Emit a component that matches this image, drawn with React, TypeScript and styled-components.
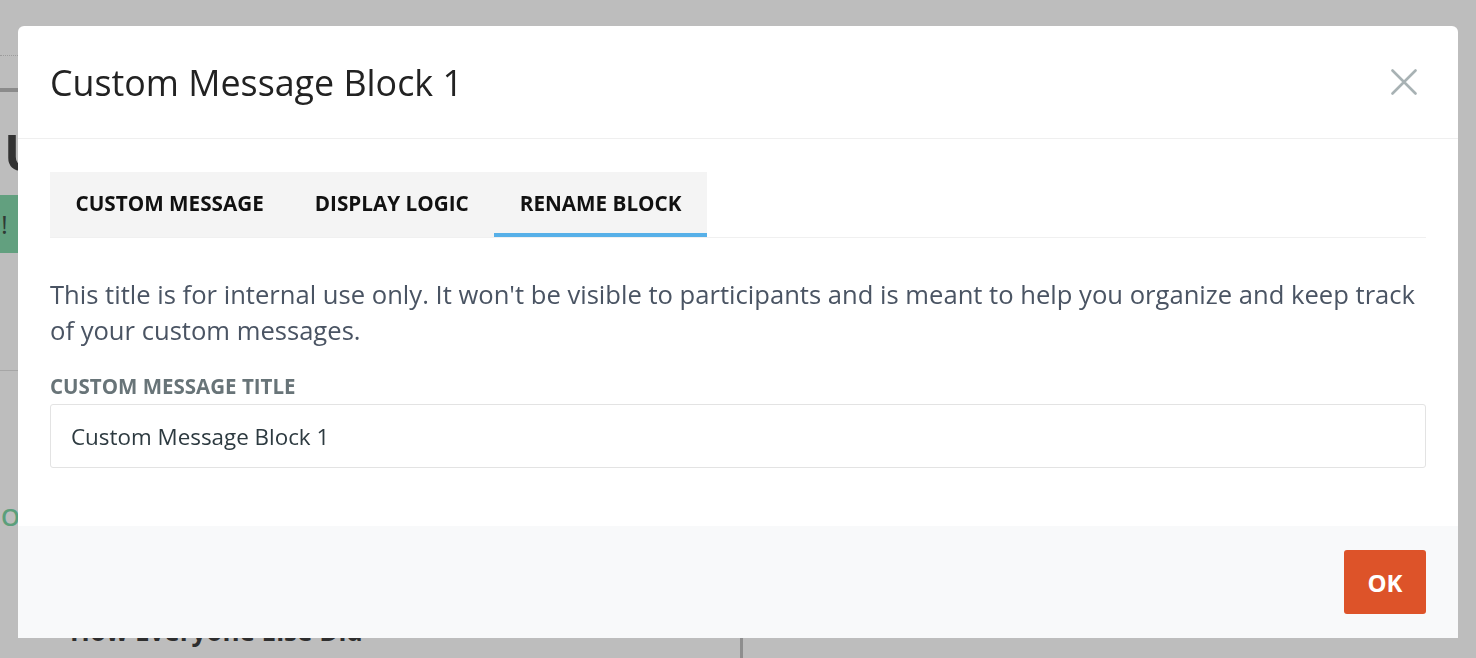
import React from "react";
import styled, { createGlobalStyle } from "styled-components";

const GlobalStyle = createGlobalStyle`
  html, body {
    margin: 0;
    padding: 0;
    background: #bdbdbd;
    overflow: hidden;
  }
  body {
    font-family: "Open Sans", "Liberation Sans", sans-serif;
  }
  * {
    box-sizing: border-box;
  }
`;

/* dimmed page behind the dialog */
const Page = styled.div`
  width: 1476px;
  height: 658px;
  background: #bdbdbd;
  overflow: hidden;
`;

const DottedRule = styled.div`
  margin-top: 55px;
  width: 600px;
  border-top: 1px dotted #9c9c9c;
`;

const NavBar = styled.div`
  margin-top: 32px;
  width: 700px;
  height: 4px;
  background: #8b8b8b;
`;

const PageHeading = styled.h1`
  margin: 30px 0 0 4px;
  font-size: 50px;
  line-height: 60px;
  font-weight: 700;
  color: #333;
`;

const Alert = styled.div`
  margin-top: 13px;
  width: 700px;
  height: 58px;
  padding-left: 1px;
  background: #62a07f;
  color: #2f3a34;
  font-size: 26px;
  line-height: 58px;
`;

const SectionRule = styled.div`
  margin-top: 117px;
  width: 700px;
  height: 1px;
  background: #a6a6a6;
`;

const GreenLink = styled.div`
  margin-top: 131px;
  padding-left: 1px;
  color: #5b9f7b;
  font-size: 24px;
  font-weight: 600;
  line-height: 30px;
`;

const Split = styled.div`
  margin-top: 83px;
  display: grid;
  grid-template-columns: 743px 1fr;
`;

const SplitLeft = styled.div`
  padding-left: 70px;
  height: 80px;
  border-right: 3px solid #8e8e8e;
`;

const SubHeading = styled.h2`
  margin: 0;
  font-size: 26px;
  line-height: 32px;
  font-weight: 700;
  color: #2e2e2e;
`;

/* dialog */
const Overlay = styled.div`
  position: fixed;
  inset: 0;
  padding: 26px 18px 0;
`;

const Dialog = styled.div`
  width: 1440px;
  height: 612px;
  background: #fff;
  border-radius: 6px 6px 0 0;
  display: flex;
  flex-direction: column;
  overflow: hidden;
`;

const Header = styled.div`
  height: 113px;
  padding: 0 32px;
  display: flex;
  align-items: center;
  justify-content: space-between;
  border-bottom: 1px solid #efefef;
`;

const Title = styled.h2`
  margin: 0;
  font-size: 35.8px;
  font-weight: 400;
  color: #222;
`;

const CloseButton = styled.button`
  width: 40px;
  height: 40px;
  margin-right: 2px;
  border: none;
  background: none;
  padding: 0;
  display: flex;
  align-items: center;
  justify-content: center;
  cursor: pointer;
`;

const Body = styled.div`
  flex: 1;
  padding: 33px 32px 0;
`;

const TabRow = styled.div`
  display: flex;
  border-bottom: 1px solid #f0f0f0;
`;

const TabList = styled.div`
  display: flex;
  background: #f4f4f4;
`;

const Tab = styled.div<{ $active?: boolean }>`
  height: 65px;
  padding: 1px 25.5px 0;
  display: flex;
  align-items: center;
  font-size: 20.7px;
  font-weight: 700;
  color: #111;
  border-bottom: 4px solid ${(p) => (p.$active ? "#57b0e8" : "transparent")};
`;

const Intro = styled.p`
  margin: 39px 0 0;
  font-size: 25.6px;
  line-height: 36px;
  color: #4a5463;
`;

const Label = styled.label`
  display: block;
  margin-top: 25px;
  font-size: 20.5px;
  font-weight: 700;
  color: #687478;
  line-height: 24px;
`;

const TextInput = styled.input`
  display: block;
  width: 100%;
  height: 64px;
  margin-top: 6px;
  padding: 0 20px;
  border: 1px solid #e3e3e3;
  border-radius: 3px;
  font-family: "Open Sans", "Liberation Sans", sans-serif;
  font-size: 22.4px;
  color: #2d3a40;
  outline: none;
`;

const Footer = styled.div`
  height: 112px;
  padding: 24px 32px;
  background: #f8f9fa;
  display: flex;
  justify-content: flex-end;
`;

const OkButton = styled.button`
  width: 82px;
  height: 64px;
  border: none;
  border-radius: 3px;
  background: #dd5329;
  color: #fff;
  font-family: "Open Sans", "Liberation Sans", sans-serif;
  font-size: 24px;
  font-weight: 700;
  cursor: pointer;
`;

export default function App() {
  return (
    <>
      <GlobalStyle />
      <Page>
        <DottedRule />
        <NavBar />
        <PageHeading>Ultimate Guide</PageHeading>
        <Alert>!</Alert>
        <SectionRule />
        <GreenLink>O</GreenLink>
        <Split>
          <SplitLeft>
            <SubHeading>How Everyone Else Did</SubHeading>
          </SplitLeft>
          <div />
        </Split>
      </Page>
      <Overlay>
        <Dialog>
          <Header>
            <Title>Custom Message Block 1</Title>
            <CloseButton aria-label="Close">
              <svg width="26" height="26" viewBox="0 0 26 26">
                <path
                  d="M1.5 1.5 L24.5 24.5 M24.5 1.5 L1.5 24.5"
                  stroke="#a8b2b4"
                  strokeWidth="2.6"
                  strokeLinecap="round"
                />
              </svg>
            </CloseButton>
          </Header>
          <Body>
            <TabRow>
              <TabList>
                <Tab>CUSTOM MESSAGE</Tab>
                <Tab>DISPLAY LOGIC</Tab>
                <Tab $active>RENAME BLOCK</Tab>
              </TabList>
            </TabRow>
            <Intro>
              This title is for internal use only. It won't be visible to
              participants and is meant to help you organize and keep track of
              your custom messages.
            </Intro>
            <Label>CUSTOM MESSAGE TITLE</Label>
            <TextInput defaultValue="Custom Message Block 1" />
          </Body>
          <Footer>
            <OkButton>OK</OkButton>
          </Footer>
        </Dialog>
      </Overlay>
    </>
  );
}
